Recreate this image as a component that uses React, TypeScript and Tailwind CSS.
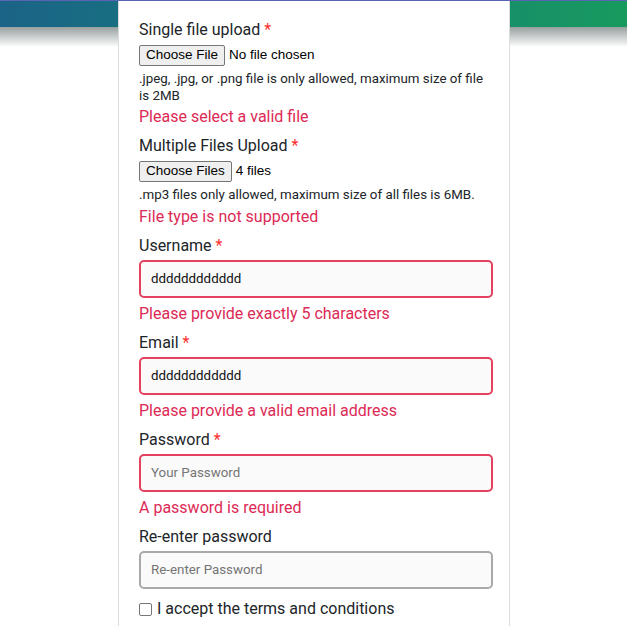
import React from "react";

const Req = () => <span className="text-[#ff2d2d]"> *</span>;

function FileRow({ btn, text }: { btn: string; text: string }) {
  return (
    <div className="flex items-center h-[22px]" style={{ fontFamily: '"Liberation Sans", Arial, sans-serif' }}>
      <span className="h-[21px] px-[6px] flex items-center rounded-[2px] border border-[#767676] bg-[#efefef] text-[13.5px] text-black leading-none">
        {btn}
      </span>
      <span className="ml-[4px] text-[13.5px] text-black">{text}</span>
    </div>
  );
}

function Field({
  label,
  required,
  value,
  placeholder,
  error,
}: {
  label: string;
  required?: boolean;
  value?: string;
  placeholder?: string;
  error?: string;
}) {
  return (
    <div className="flex flex-col">
      <div className="h-[24px] leading-[24px] text-[16px] text-[#212529]">
        {label}
        {required && <Req />}
      </div>
      <div
        className={`mt-[2px] h-[38px] w-[354px] rounded-[5px] border-2 bg-[#fafafa] flex items-center pl-[10px] text-[13.33px] ${
          error ? "border-[#e4405f]" : "border-[#a9a9a9]"
        }`}
      >
        {value ? (
          <span className="text-[#111]">{value}</span>
        ) : (
          <span className="text-[#757575]">{placeholder}</span>
        )}
      </div>
      {error && (
        <div className="mt-[4px] h-[24px] leading-[24px] text-[16px] text-[#dc2a55]">{error}</div>
      )}
    </div>
  );
}

export default function App() {
  return (
    <div className="relative w-[627px] h-[626px] overflow-hidden bg-white" style={{ fontFamily: 'Roboto, "Noto Sans", sans-serif' }}>
      <div className="h-[1px] bg-[#5b63b5]" />
      <div className="h-[26px] bg-gradient-to-r from-[#1b6387] to-[#189a5e]" />
      <div className="h-[20px] bg-gradient-to-b from-[#98a0a0] to-white" />
      <div className="relative -mt-[46px] ml-[118px] w-[392px] h-[640px] bg-white border-x border-[#dcdcdc] pl-[20px] pt-[17px]">
        <div className="h-[24px] leading-[24px] text-[16px] text-[#212529]">
          Single file upload
          <Req />
        </div>
        <div className="mt-[2px]">
          <FileRow btn="Choose File" text="No file chosen" />
        </div>
        <div className="mt-[4px] text-[13.33px] leading-[17px] text-[#212529] w-[354px]">
          .jpeg, .jpg, or .png file is only allowed, maximum size of file is 2MB
        </div>
        <div className="mt-[1px] h-[24px] leading-[24px] text-[16px] text-[#dc2a55]">Please select a valid file</div>
        <div className="mt-[5px] h-[24px] leading-[24px] text-[16px] text-[#212529]">
          Multiple Files Upload
          <Req />
        </div>
        <div className="mt-[2px]">
          <FileRow btn="Choose Files" text="4 files" />
        </div>
        <div className="mt-[4px] text-[13.33px] leading-[17px] text-[#212529]">
          .mp3 files only allowed, maximum size of all files is 6MB.
        </div>
        <div className="mt-[2px] h-[24px] leading-[24px] text-[16px] text-[#dc2a55]">File type is not supported</div>
        <div className="mt-[5px] flex flex-col gap-[5px]">
          <Field label="Username" required value="dddddddddddd" error="Please provide exactly 5 characters" />
          <Field label="Email" required value="dddddddddddd" error="Please provide a valid email address" />
          <Field label="Password" required placeholder="Your Password" error="A password is required" />
          <Field label="Re-enter password" placeholder="Re-enter Password" />
        </div>
        <div className="mt-[8px] flex items-center h-[24px] text-[16px] text-[#212529]">
          <span className="w-[13px] h-[13px] rounded-[2px] border border-[#767676] bg-white" />
          <span className="ml-[5px]">I accept the terms and conditions</span>
        </div>
      </div>
    </div>
  );
}
